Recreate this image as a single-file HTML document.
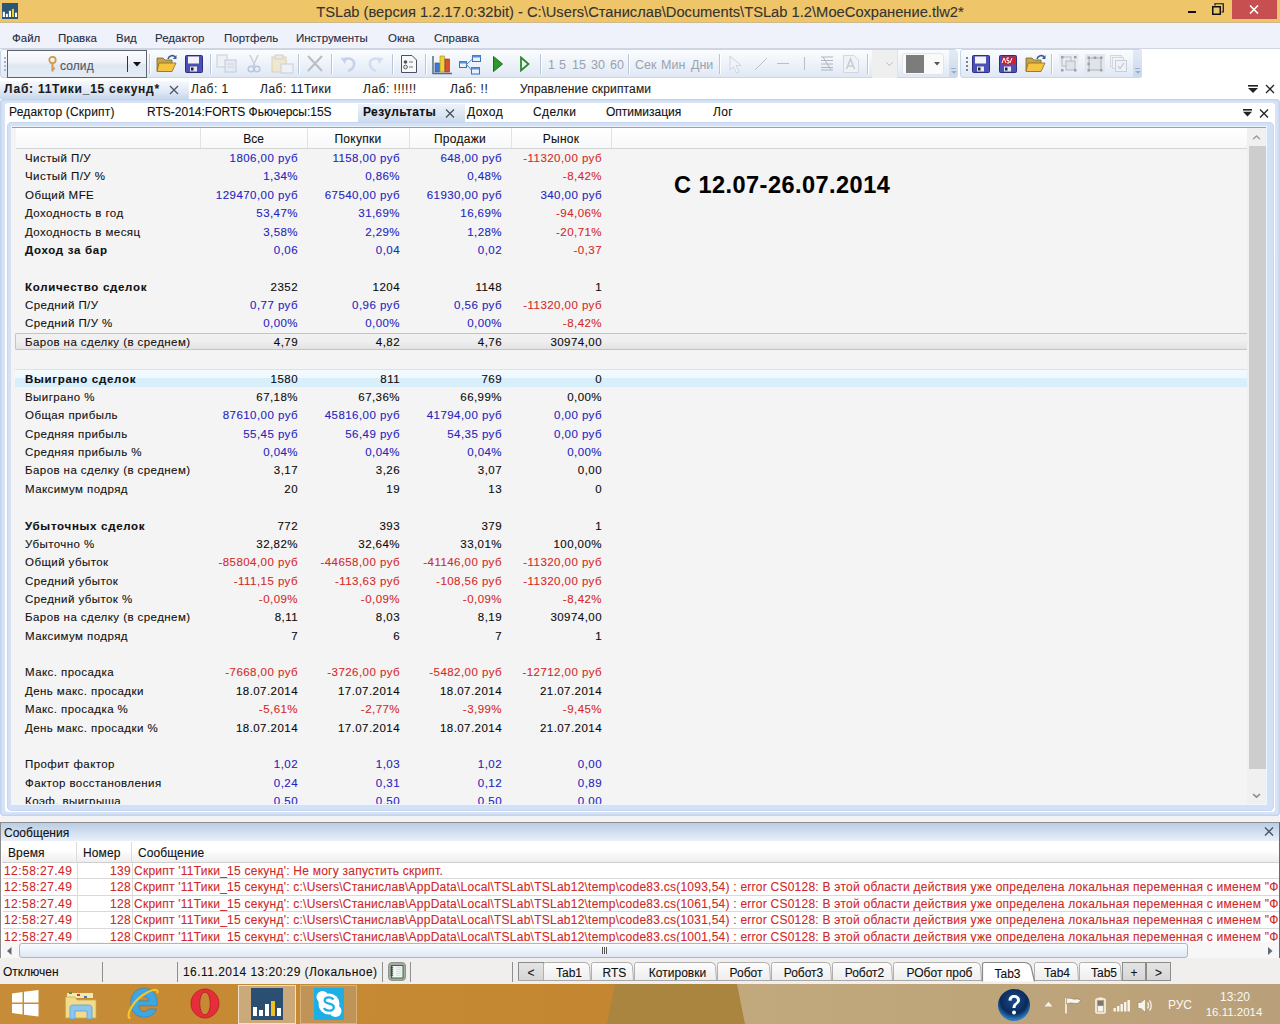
<!DOCTYPE html>
<html><head><meta charset="utf-8">
<style>
*{box-sizing:border-box;margin:0;padding:0}
html,body{width:1280px;height:1024px;overflow:hidden;background:#fff;font-family:"Liberation Sans",sans-serif;font-size:12px;color:#101010}
.a{position:absolute}
.t{position:absolute;white-space:pre;line-height:14px;-webkit-text-stroke:0.1px currentColor}
.lb,.vl,.mrow span{-webkit-text-stroke:0.1px currentColor}
/* title */
#title{left:0;top:0;width:1280px;height:23px;background:#efc56a;border-bottom:1px solid #cdb98e}
#title .cap{left:0;width:1280px;top:3.5px;text-align:center;font-size:14.7px;line-height:17px;color:#333}
#close{left:1232px;top:0;width:45px;height:19px;background:#c74f4f}
/* menu */
#menu{left:0;top:23px;width:1280px;height:26px;background:#eff2fa;border-bottom:1px solid #cfd6e2}
#menu .t{top:8px;font-size:11.5px;color:#1e2d45}
/* toolbar */
#tbar{left:0;top:49px;width:1280px;height:30px;background:#fff}
.band{position:absolute;top:0;height:29px;border:1px solid #c9d6e8;border-radius:3px;background:linear-gradient(#fbfcfe 0%,#eef3fa 50%,#dfe8f4 100%)}
.sep{position:absolute;top:5px;width:1px;height:20px;background:#b9c6d8;box-shadow:1px 0 0 #fff}
.tbt{position:absolute;top:8.5px;font-size:12px;line-height:14px;color:#9aa2ae;white-space:pre}
/* doc tabs */
#dtabs{left:0;top:79px;width:1280px;height:21px;background:#fff}
#dtabs .t{top:3px;color:#1a1a1a}
#seltab{left:0;top:2px;width:189px;height:18px;background:linear-gradient(#f7f9fd,#dfe8f5 60%,#c7d7ed)}
/* main frame */
#frame{left:0;top:99px;width:1280px;height:717px;background:#d6e3f7;box-shadow:inset 0 0 0 1.5px #c4d4ed;border-radius:4px}
#framein{left:5px;top:4px;width:1270px;height:709px;background:#fff;border-radius:3px}
#ptabs .t{top:6px}
#selptab{left:353px;top:1px;width:107px;height:18px;background:linear-gradient(#eef3fa,#cddbee)}
#gframe{left:7px;top:23px;width:1267px;height:689px;background:#d3e0f6;box-shadow:inset 0 0 0 1px #c6d6ef;border-radius:5px}
#ginner{left:12px;top:127px;width:1254px;height:677px;background:#f4f4f4;border-top:1px solid #7fa3d3;overflow:hidden;box-shadow:0 0 0 1px #eef6fd}
#ghead{left:4px;top:0;width:1231px;height:21px;background:linear-gradient(#fff,#f7f8fa);border-bottom:1px solid #d5d5d5}
.hsep{position:absolute;top:0;width:1px;height:20px;background:#e2e2e2}
.lb{position:absolute;left:13px;white-space:pre;line-height:14px;font-size:11.5px;letter-spacing:0.43px;color:#101010}
.lb.b{font-weight:bold;letter-spacing:0.7px}
.vl{position:absolute;white-space:pre;line-height:14px;font-size:11.5px;letter-spacing:0.45px;text-align:right}
#vscroll{left:1235px;top:0;width:19px;height:676px;background:#f0f0f0}
#thumb{left:2px;top:18px;width:17px;height:623px;background:#cdcdcd}
/* messages */
#msgp{left:0;top:822px;width:1280px;height:136px;background:#fff;border-top:1px solid #8f8f8f;border-right:1px solid #6a6a6a;border-left:1px solid #8a8a8a}
#msgtitle{left:0;top:0;width:1278px;height:18px;background:linear-gradient(#b9cde6,#e9f0f9)}
#mhead{left:1px;top:19px;width:1277px;height:21px;background:linear-gradient(#fff 0%,#fff 40%,#eeeeee 100%);border-bottom:1px solid #cfcfcf}
.mrow{position:absolute;left:2px;width:1277px;height:16.4px;border-bottom:1px solid #d9d9d9;white-space:pre;color:#d02828;overflow:hidden}
.mrow span{position:absolute;top:1px;line-height:14px}
.mt{left:1px;letter-spacing:0.45px}
.mn{left:74px;width:54px;text-align:right;letter-spacing:0.3px}
.mm{left:131px;letter-spacing:0.24px}
#mbody{left:0;top:40px;width:1278px;height:80px;overflow:hidden}
/* status */
#status{left:0;top:958px;width:1280px;height:26px;background:#f0efee}
#status .t{top:7px}
.ssep{position:absolute;top:4px;width:1px;height:20px;background:#8f8f8f}
.stab{position:absolute;top:5px;height:18px;background:linear-gradient(#fafafa,#eaeaea);border:1px solid #b5b5b5;border-bottom:none;border-radius:2px 8px 0 0}
.stab span{position:absolute;left:0;right:0;top:2px;text-align:center;line-height:14px;white-space:pre}
/* taskbar */
#task{left:0;top:984px;width:1280px;height:40px;background:#c48a36}
</style></head><body>

<!-- TITLE -->
<div id="title" class="a">
  <svg class="a" style="left:2px;top:3px" width="16" height="16" viewBox="0 0 16 16"><rect width="16" height="16" fill="#2b5676"/><rect x="0.8" y="8.8" width="2.1" height="5.2" fill="#fff"/><rect x="3.9" y="10.8" width="2" height="3.2" fill="#fff"/><rect x="6.9" y="7.8" width="2.1" height="6.2" fill="#fff"/><rect x="10" y="5.9" width="2" height="8.1" fill="#f5cc22"/><rect x="13" y="9.7" width="2" height="4.3" fill="#fff"/></svg>
  <div class="t cap">TSLab (версия 1.2.17.0:32bit) - C:\Users\Станислав\Documents\TSLab 1.2\МоеСохранение.tlw2*</div>
  <div class="a" style="left:1188px;top:11px;width:8px;height:2px;background:#111"></div>
  <svg class="a" style="left:1212px;top:3px" width="12" height="12" viewBox="0 0 12 12"><rect x="0.75" y="3.75" width="7.5" height="7.5" fill="none" stroke="#111" stroke-width="1.5"/><path d="M3 2.5V0.75H11.25V9H9.5" fill="none" stroke="#111" stroke-width="1.2"/></svg>
  <div id="close" class="a"><svg class="a" style="left:17px;top:5px" width="10" height="9" viewBox="0 0 10 9"><path d="M1 0.5L9 8.5M9 0.5L1 8.5" stroke="#fff" stroke-width="1.6"/></svg></div>
</div>

<!-- MENU -->
<div id="menu" class="a">
  <div class="t" style="left:12px">Файл</div>
  <div class="t" style="left:58px">Правка</div>
  <div class="t" style="left:116px">Вид</div>
  <div class="t" style="left:155px">Редактор</div>
  <div class="t" style="left:224px">Портфель</div>
  <div class="t" style="left:296px">Инструменты</div>
  <div class="t" style="left:388px">Окна</div>
  <div class="t" style="left:434px">Справка</div>
</div>

<!-- TOOLBAR -->
<div id="tbar" class="a">
  <div class="band" style="left:0;width:957px"></div>
  <div class="band" style="left:960px;width:182px"></div>
  <!-- grip -->
<div class="a" style="left:4px;top:8px;width:2px;height:15px;background:repeating-linear-gradient(#a9b6c8 0 2px,transparent 2px 4px)"></div>
<!-- combo -->
<div class="a" style="left:7px;top:1px;width:140px;height:28px;border:1px solid #5d636e;background:linear-gradient(#fbfcfe 0%,#eef2f8 45%,#dfe7f2 55%,#e5ecf5 100%)"></div>
<svg class="a" style="left:48px;top:7px" width="9" height="17" viewBox="0 0 9 17"><circle cx="4.5" cy="4" r="3.2" fill="none" stroke="#d19a4a" stroke-width="1.8"/><path d="M4.5 7V15.5M4.5 12.5H7" stroke="#d19a4a" stroke-width="2"/></svg>
<div class="t" style="left:60px;top:9.5px;font-size:12px;color:#4e5666;letter-spacing:0.1px">солид</div>
<div class="a" style="left:127px;top:7px;width:1px;height:16px;background:#333"></div>
<svg class="a" style="left:133px;top:13px" width="8" height="5" viewBox="0 0 8 5"><path d="M0 0H8L4 4.5Z" fill="#111"/></svg>
<div class="sep" style="left:149px"></div>
<!-- open -->
<svg class="a" style="left:156px;top:5px" width="22" height="19" viewBox="0 0 22 19"><path d="M1 4H7L9 6H16V17H1Z" fill="#c9a44a" stroke="#7a6530" stroke-width="0.8"/><path d="M3 9H20L16 17.5H1Z" fill="#f5c542" stroke="#8b6a22" stroke-width="0.8"/><path d="M12 5C13 1.5 17 0.5 19.5 3" fill="none" stroke="#3a5f8f" stroke-width="1.6"/><path d="M20.5 1V5H16.8Z" fill="#3a5f8f"/></svg>
<!-- save -->
<svg class="a" style="left:185px;top:6px" width="18" height="18" viewBox="0 0 18 18"><rect x="0.5" y="0.5" width="17" height="17" rx="1" fill="#4b4fb8" stroke="#2c2f80"/><rect x="3" y="1.5" width="11" height="7" fill="#f4f4f8"/><rect x="5" y="11.5" width="7" height="5" fill="#e8e8ee"/><rect x="6" y="12.5" width="2.5" height="3" fill="#222"/></svg>
<div class="sep" style="left:210px"></div>
<!-- copy disabled -->
<svg class="a" style="left:216px;top:5px" width="22" height="19" viewBox="0 0 22 19"><rect x="1" y="1" width="10" height="12" fill="#eef1f6" stroke="#c7ced9"/><rect x="9" y="6" width="11" height="12" fill="#e6ebf3" stroke="#c2cad8"/><path d="M11 10H18M11 13H18" stroke="#cdd4df"/></svg>
<!-- cut disabled -->
<svg class="a" style="left:247px;top:5px" width="14" height="19" viewBox="0 0 14 19"><path d="M3 1L8 12M11 1L6 12" stroke="#c9d1e0" stroke-width="1.6"/><circle cx="4" cy="15" r="2.8" fill="none" stroke="#b8c6e2" stroke-width="1.5"/><circle cx="10" cy="15" r="2.8" fill="none" stroke="#b8c6e2" stroke-width="1.5"/></svg>
<!-- paste disabled -->
<svg class="a" style="left:271px;top:5px" width="23" height="20" viewBox="0 0 23 20"><rect x="1" y="3" width="14" height="15" fill="#efe8cf" stroke="#d9d0b4"/><rect x="4" y="1" width="8" height="4" fill="#e9e9ea" stroke="#cfcfd2"/><rect x="10" y="10" width="12" height="9" fill="#eef1f6" stroke="#c7ced9"/></svg>
<div class="sep" style="left:298px"></div>
<!-- delete X disabled -->
<svg class="a" style="left:307px;top:6px" width="16" height="17" viewBox="0 0 16 17"><path d="M1 1L15 16M15 1L1 16" stroke="#b9bdc4" stroke-width="2"/></svg>
<div class="sep" style="left:331px"></div>
<!-- undo/redo disabled -->
<svg class="a" style="left:340px;top:7px" width="17" height="16" viewBox="0 0 17 16"><path d="M4 4C9 1 15 3 14 9C13.5 12 11 14 8 15" fill="none" stroke="#c5d3ea" stroke-width="2.6"/><path d="M0.5 2L7 1.5L5 8Z" fill="#c5d3ea"/></svg>
<svg class="a" style="left:367px;top:7px" width="17" height="16" viewBox="0 0 17 16"><path d="M13 4C8 1 2 3 3 9C3.5 12 6 14 9 15" fill="none" stroke="#d2ddef" stroke-width="2.6"/><path d="M16.5 2L10 1.5L12 8Z" fill="#d2ddef"/></svg>
<div class="sep" style="left:392px"></div>
<!-- properties doc -->
<svg class="a" style="left:401px;top:6px" width="16" height="18" viewBox="0 0 16 18"><path d="M0.5 0.5H11L15.5 5V17.5H0.5Z" fill="#f7f8fa" stroke="#4a5060"/><circle cx="4.5" cy="7" r="1.8" fill="#555"/><circle cx="4.5" cy="12" r="1.8" fill="none" stroke="#555"/><path d="M8 7H12M8 12H12" stroke="#777" stroke-width="1.2"/></svg>
<div class="sep" style="left:425px"></div>
<!-- chart -->
<svg class="a" style="left:432px;top:5px" width="22" height="21" viewBox="0 0 22 21"><path d="M1 2V19.5H20" fill="none" stroke="#5b6a80" stroke-width="1.5"/><rect x="3" y="9" width="4.5" height="9" fill="#3f7ad0" stroke="#274f8a" stroke-width="0.6"/><rect x="8" y="2" width="4.5" height="16" fill="#f0cf3a" stroke="#9f8a1c" stroke-width="0.6"/><rect x="13" y="5" width="4.5" height="13" fill="#d8502c" stroke="#8d2f16" stroke-width="0.6"/></svg>
<!-- network -->
<svg class="a" style="left:459px;top:6px" width="22" height="20" viewBox="0 0 22 20"><rect x="0.5" y="6.5" width="7" height="6" fill="#e8f0fb" stroke="#3c6fc0"/><rect x="0.5" y="6.5" width="7" height="2" fill="#5a8fd8"/><rect x="13.5" y="0.5" width="8" height="6" fill="#e8f0fb" stroke="#3c6fc0"/><rect x="13.5" y="0.5" width="8" height="2" fill="#5a8fd8"/><rect x="12.5" y="12.5" width="8" height="6.5" fill="#e8f0fb" stroke="#3c6fc0"/><rect x="12.5" y="12.5" width="8" height="2" fill="#5a8fd8"/><path d="M7.5 9.5L13.5 4M7.5 9.5L12.5 15" stroke="#5a7fb8"/></svg>
<!-- play -->
<svg class="a" style="left:493px;top:7px" width="10" height="16" viewBox="0 0 10 16"><path d="M0.5 0.5L9.5 8L0.5 15.5Z" fill="#2d9a2d" stroke="#1d6a1d"/></svg>
<svg class="a" style="left:520px;top:7px" width="10" height="16" viewBox="0 0 10 16"><path d="M1 1.5L8.5 8L1 14.5Z" fill="none" stroke="#2a8a2a" stroke-width="1.8"/></svg>
<div class="sep" style="left:540px"></div>
<div class="tbt" style="left:548px;font-size:12.5px">1</div>
<div class="tbt" style="left:559px;font-size:12.5px">5</div>
<div class="tbt" style="left:572px;font-size:12.5px">15</div>
<div class="tbt" style="left:591px;font-size:12.5px">30</div>
<div class="tbt" style="left:610px;font-size:12.5px">60</div>
<div class="sep" style="left:628px"></div>
<div class="tbt" style="left:635px;font-size:12.5px">Сек</div>
<div class="tbt" style="left:661px;font-size:12.5px">Мин</div>
<div class="tbt" style="left:691px;font-size:12.5px">Дни</div>
<div class="sep" style="left:719px"></div>
<!-- drawing tools disabled -->
<svg class="a" style="left:729px;top:6px" width="13" height="19" viewBox="0 0 13 19"><path d="M1 1V15L4.5 11.5L7.5 18L10 17L7 10.5H12Z" fill="#f1f4f8" stroke="#cdd5e0" stroke-width="1"/></svg>
<svg class="a" style="left:754px;top:8px" width="14" height="14" viewBox="0 0 14 14"><path d="M1 13L13 1" stroke="#b8bec8" stroke-width="1"/></svg>
<div class="a" style="left:777px;top:14px;width:12px;height:1px;background:#b8bec8"></div>
<div class="a" style="left:804px;top:8px;width:1px;height:13px;background:#b8bec8"></div>
<svg class="a" style="left:820px;top:7px" width="14" height="15" viewBox="0 0 14 15"><path d="M1 1H13M1 4.5H13M1 8H13M1 11.5H13M1 14H13M3 1L11 14" stroke="#b0b6c0" stroke-width="1"/></svg>
<svg class="a" style="left:843px;top:6px" width="16" height="18" viewBox="0 0 16 18"><path d="M0.5 0.5H11L15.5 5V17.5H0.5Z" fill="#f0f2f5" stroke="#d3d8e0"/><path d="M3.5 14L7.5 4L11.5 14M5 11H10" stroke="#c7ccd5" stroke-width="1.6" fill="none"/></svg>
<div class="sep" style="left:867px"></div>
<div class="a" style="left:872px;top:1px;width:26px;height:28px;background:#efefef;border-right:1px solid #e2e2e2"></div>
<svg class="a" style="left:886px;top:13px" width="7" height="4" viewBox="0 0 7 4"><path d="M0.5 0.5L3.5 3.5L6.5 0.5" fill="none" stroke="#b9b9b9"/></svg>
<div class="a" style="left:902px;top:4px;width:42px;height:22px;border:1px solid #e2e6ec;border-radius:3px;background:#fafafa"></div>
<div class="a" style="left:906px;top:6px;width:18px;height:18px;background:#7c7c7c"></div>
<svg class="a" style="left:934px;top:13px" width="6" height="4" viewBox="0 0 6 4"><path d="M0 0H6L3 3.5Z" fill="#555"/></svg>
<div class="a" style="left:949px;top:1px;width:9px;height:28px;background:linear-gradient(#e3ebf6,#c9d8ec);border-radius:0 3px 3px 0"></div>
<div class="a" style="left:951px;top:19px;width:5px;height:1px;background:#9badc9"></div>
<svg class="a" style="left:951px;top:22px" width="6" height="4" viewBox="0 0 6 4"><path d="M0 0H6L3 3Z" fill="#9badc9"/></svg>
<!-- band 2 -->
<div class="a" style="left:966px;top:8px;width:2px;height:15px;background:repeating-linear-gradient(#778397 0 2px,transparent 2px 4px)"></div>
<svg class="a" style="left:972px;top:6px" width="18" height="18" viewBox="0 0 18 18"><rect x="0.5" y="0.5" width="17" height="17" rx="1" fill="#4b4fb8" stroke="#2c2f80"/><rect x="3" y="1.5" width="11" height="7" fill="#f4f4f8"/><rect x="5" y="11.5" width="7" height="5" fill="#e8e8ee"/><rect x="6" y="12.5" width="2.5" height="3" fill="#222"/></svg>
<svg class="a" style="left:999px;top:6px" width="18" height="18" viewBox="0 0 18 18"><rect x="0.5" y="0.5" width="17" height="17" rx="1" fill="#4b4fb8" stroke="#2c2f80"/><rect x="2" y="1.5" width="14" height="8" fill="#d02030"/><path d="M3 8L5 3L7 8M10 3H8V5.5H10V8H8M11 8L13 3" stroke="#fff" stroke-width="1" fill="none"/><rect x="5" y="11.5" width="7" height="5" fill="#e8e8ee"/><rect x="6" y="12.5" width="2.5" height="3" fill="#222"/></svg>
<svg class="a" style="left:1025px;top:5px" width="22" height="19" viewBox="0 0 22 19"><path d="M1 4H7L9 6H16V17H1Z" fill="#c9a44a" stroke="#7a6530" stroke-width="0.8"/><path d="M3 9H20L16 17.5H1Z" fill="#f5c542" stroke="#8b6a22" stroke-width="0.8"/><path d="M12 5C13 1.5 17 0.5 19.5 3" fill="none" stroke="#3a5f8f" stroke-width="1.6"/><path d="M20.5 1V5H16.8Z" fill="#3a5f8f"/></svg>
<div class="sep" style="left:1051px"></div>
<svg class="a" style="left:1059px;top:5px" width="20" height="20" viewBox="0 0 20 20"><rect x="0" y="0" width="20" height="20" fill="#e9ecf0"/><rect x="3" y="3" width="9" height="9" fill="none" stroke="#b3b9c3"/><rect x="7" y="7" width="9" height="9" fill="#e0e4ea" stroke="#b3b9c3"/><rect x="2" y="2" width="2.5" height="2.5" fill="#9aa1ac"/><rect x="15" y="2" width="2.5" height="2.5" fill="#9aa1ac"/><rect x="2" y="15" width="2.5" height="2.5" fill="#9aa1ac"/><rect x="15" y="15" width="2.5" height="2.5" fill="#9aa1ac"/></svg>
<svg class="a" style="left:1085px;top:5px" width="20" height="20" viewBox="0 0 20 20"><rect x="0" y="0" width="20" height="20" fill="#e4e7eb"/><rect x="4" y="4" width="12" height="12" fill="#e0e4ea" stroke="#a9b0ba"/><rect x="2.5" y="2.5" width="2.5" height="2.5" fill="#9aa1ac"/><rect x="15" y="2.5" width="2.5" height="2.5" fill="#9aa1ac"/><rect x="2.5" y="15" width="2.5" height="2.5" fill="#9aa1ac"/><rect x="15" y="15" width="2.5" height="2.5" fill="#9aa1ac"/><rect x="8.75" y="2.5" width="2.5" height="2.5" fill="#9aa1ac"/><rect x="2.5" y="8.75" width="2.5" height="2.5" fill="#9aa1ac"/></svg>
<svg class="a" style="left:1110px;top:6px" width="17" height="18" viewBox="0 0 17 18"><rect x="0.5" y="0.5" width="11" height="11" fill="#f1f3f6" stroke="#d3d8df"/><rect x="2.5" y="2.5" width="11" height="11" fill="#f1f3f6" stroke="#d3d8df"/><rect x="5.5" y="5.5" width="11" height="11" fill="#eef1f5" stroke="#c9cfd8"/><path d="M8 11L10 13.5L14 8" fill="none" stroke="#c0c7d2" stroke-width="1.2"/></svg>
<div class="a" style="left:1133px;top:1px;width:9px;height:28px;background:linear-gradient(#e3ebf6,#c9d8ec);border-radius:0 3px 3px 0"></div>
<div class="a" style="left:1135px;top:19px;width:5px;height:1px;background:#9badc9"></div>
<svg class="a" style="left:1135px;top:22px" width="6" height="4" viewBox="0 0 6 4"><path d="M0 0H6L3 3Z" fill="#9badc9"/></svg>

</div>

<!-- DOC TABS -->
<div id="dtabs" class="a">
  <div id="seltab" class="a"></div>
  <div class="t" style="left:4px;font-weight:bold;letter-spacing:0.75px">Лаб: 11Тики_15 секунд*</div>
  <svg class="a" style="left:169px;top:6px" width="10" height="10" viewBox="0 0 10 10"><path d="M1 1L9 9M9 1L1 9" stroke="#4f5660" stroke-width="1.3"/></svg>
  <div class="t" style="left:191px;letter-spacing:0.5px">Лаб: 1</div>
  <div class="t" style="left:260px;letter-spacing:0.5px">Лаб: 11Тики</div>
  <div class="t" style="left:363px;letter-spacing:0.5px">Лаб: !!!!!!</div>
  <div class="t" style="left:450px;letter-spacing:0.5px">Лаб: !!</div>
  <div class="t" style="left:520px;letter-spacing:0.15px">Управление скриптами</div>
  <svg class="a" style="left:1248px;top:6px" width="10" height="10" viewBox="0 0 10 10"><rect x="0" y="0" width="10" height="1.6" fill="#222"/><path d="M0 3H10L5 8Z" fill="#222"/></svg>
<svg class="a" style="left:1265px;top:5px" width="10" height="10" viewBox="0 0 10 10"><path d="M1 1L9 9M9 1L1 9" stroke="#222" stroke-width="1.3"/></svg>

</div>

<!-- MAIN FRAME -->
<div id="frame" class="a">
  <div id="framein" class="a">
    <div id="ptabs">
      <div id="selptab" class="a"></div>
      <div class="t" style="left:4px;top:2px;letter-spacing:0.2px">Редактор (Скрипт)</div>
      <div class="t" style="left:142px;top:2px">RTS-2014:FORTS Фьючерсы:15S</div>
      <div class="t" style="left:358px;top:2px;font-weight:bold;letter-spacing:0.4px">Результаты</div>
      <svg class="a" style="left:440px;top:6px" width="10" height="9" viewBox="0 0 10 9"><path d="M1 0.5L9 8.5M9 0.5L1 8.5" stroke="#4a4f58" stroke-width="1.3"/></svg>
      <div class="t" style="left:462px;top:2px;letter-spacing:0.4px">Доход</div>
      <div class="t" style="left:528px;top:2px;letter-spacing:0.4px">Сделки</div>
      <div class="t" style="left:601px;top:2px">Оптимизация</div>
      <div class="t" style="left:708px;top:2px;letter-spacing:0.4px">Лог</div>
      <svg class="a" style="left:1238px;top:6px" width="10" height="9" viewBox="0 0 10 9"><rect x="0" y="0" width="9" height="1.6" fill="#222"/><path d="M0 2.8H9L4.5 7.5Z" fill="#222"/></svg>
      <svg class="a" style="left:1254px;top:6px" width="10" height="9" viewBox="0 0 10 9"><path d="M1 0.5L9 8.5M9 0.5L1 8.5" stroke="#222" stroke-width="1.3"/></svg>
    </div>
  </div>
  <div id="gframe" class="a"></div>
</div>

<div id="ginner" class="a">
  <div id="ghead" class="a">
    <div class="hsep" style="left:184px"></div>
    <div class="hsep" style="left:291px"></div>
    <div class="hsep" style="left:393px"></div>
    <div class="hsep" style="left:495px"></div>
    <div class="hsep" style="left:595px"></div>
    <div class="t" style="left:184px;width:107px;top:4px;text-align:center">Все</div>
    <div class="t" style="left:291px;width:102px;top:4px;text-align:center;letter-spacing:0.3px">Покупки</div>
    <div class="t" style="left:393px;width:102px;top:4px;text-align:center;letter-spacing:0.3px">Продажи</div>
    <div class="t" style="left:495px;width:100px;top:4px;text-align:center;letter-spacing:0.3px">Рынок</div>
  </div>
  <div class="a" style="left:3px;top:205px;width:1234px;height:17px;border:1px solid #c4c4c4;border-right-color:#dadada;border-radius:2px;background:linear-gradient(#f1f1f1 0%,#efefef 45%,#e3e3e3 100%)"></div>
  <div class="a" style="left:3px;top:241px;width:1234px;height:18px;border-top:1px solid #cfe6f6;background:linear-gradient(#f3fafd 0%,#eef8fd 45%,#d9effb 50%,#d6eefb 100%)"></div>
<div class="lb" style="top:23.10px">Чистый П/У</div>
<div class="vl" style="top:23.10px;left:86px;width:200px;color:#2424c0">1806,00 руб</div>
<div class="vl" style="top:23.10px;left:188px;width:200px;color:#2424c0">1158,00 руб</div>
<div class="vl" style="top:23.10px;left:290px;width:200px;color:#2424c0">648,00 руб</div>
<div class="vl" style="top:23.10px;left:390px;width:200px;color:#d42a2a">-11320,00 руб</div>
<div class="lb" style="top:41.47px">Чистый П/У %</div>
<div class="vl" style="top:41.47px;left:86px;width:200px;color:#2424c0">1,34%</div>
<div class="vl" style="top:41.47px;left:188px;width:200px;color:#2424c0">0,86%</div>
<div class="vl" style="top:41.47px;left:290px;width:200px;color:#2424c0">0,48%</div>
<div class="vl" style="top:41.47px;left:390px;width:200px;color:#d42a2a">-8,42%</div>
<div class="lb" style="top:59.84px">Общий MFE</div>
<div class="vl" style="top:59.84px;left:86px;width:200px;color:#2424c0">129470,00 руб</div>
<div class="vl" style="top:59.84px;left:188px;width:200px;color:#2424c0">67540,00 руб</div>
<div class="vl" style="top:59.84px;left:290px;width:200px;color:#2424c0">61930,00 руб</div>
<div class="vl" style="top:59.84px;left:390px;width:200px;color:#2424c0">340,00 руб</div>
<div class="lb" style="top:78.21px">Доходность в год</div>
<div class="vl" style="top:78.21px;left:86px;width:200px;color:#2424c0">53,47%</div>
<div class="vl" style="top:78.21px;left:188px;width:200px;color:#2424c0">31,69%</div>
<div class="vl" style="top:78.21px;left:290px;width:200px;color:#2424c0">16,69%</div>
<div class="vl" style="top:78.21px;left:390px;width:200px;color:#d42a2a">-94,06%</div>
<div class="lb" style="top:96.58px">Доходность в месяц</div>
<div class="vl" style="top:96.58px;left:86px;width:200px;color:#2424c0">3,58%</div>
<div class="vl" style="top:96.58px;left:188px;width:200px;color:#2424c0">2,29%</div>
<div class="vl" style="top:96.58px;left:290px;width:200px;color:#2424c0">1,28%</div>
<div class="vl" style="top:96.58px;left:390px;width:200px;color:#d42a2a">-20,71%</div>
<div class="lb b" style="top:114.95px">Доход за бар</div>
<div class="vl" style="top:114.95px;left:86px;width:200px;color:#2424c0">0,06</div>
<div class="vl" style="top:114.95px;left:188px;width:200px;color:#2424c0">0,04</div>
<div class="vl" style="top:114.95px;left:290px;width:200px;color:#2424c0">0,02</div>
<div class="vl" style="top:114.95px;left:390px;width:200px;color:#d42a2a">-0,37</div>
<div class="lb b" style="top:151.69px">Количество сделок</div>
<div class="vl" style="top:151.69px;left:86px;width:200px;color:#0a0a0a">2352</div>
<div class="vl" style="top:151.69px;left:188px;width:200px;color:#0a0a0a">1204</div>
<div class="vl" style="top:151.69px;left:290px;width:200px;color:#0a0a0a">1148</div>
<div class="vl" style="top:151.69px;left:390px;width:200px;color:#0a0a0a">1</div>
<div class="lb" style="top:170.06px">Средний П/У</div>
<div class="vl" style="top:170.06px;left:86px;width:200px;color:#2424c0">0,77 руб</div>
<div class="vl" style="top:170.06px;left:188px;width:200px;color:#2424c0">0,96 руб</div>
<div class="vl" style="top:170.06px;left:290px;width:200px;color:#2424c0">0,56 руб</div>
<div class="vl" style="top:170.06px;left:390px;width:200px;color:#d42a2a">-11320,00 руб</div>
<div class="lb" style="top:188.43px">Средний П/У %</div>
<div class="vl" style="top:188.43px;left:86px;width:200px;color:#2424c0">0,00%</div>
<div class="vl" style="top:188.43px;left:188px;width:200px;color:#2424c0">0,00%</div>
<div class="vl" style="top:188.43px;left:290px;width:200px;color:#2424c0">0,00%</div>
<div class="vl" style="top:188.43px;left:390px;width:200px;color:#d42a2a">-8,42%</div>
<div class="lb" style="top:206.80px">Баров на сделку (в среднем)</div>
<div class="vl" style="top:206.80px;left:86px;width:200px;color:#0a0a0a">4,79</div>
<div class="vl" style="top:206.80px;left:188px;width:200px;color:#0a0a0a">4,82</div>
<div class="vl" style="top:206.80px;left:290px;width:200px;color:#0a0a0a">4,76</div>
<div class="vl" style="top:206.80px;left:390px;width:200px;color:#0a0a0a">30974,00</div>
<div class="lb b" style="top:243.54px">Выиграно сделок</div>
<div class="vl" style="top:243.54px;left:86px;width:200px;color:#0a0a0a">1580</div>
<div class="vl" style="top:243.54px;left:188px;width:200px;color:#0a0a0a">811</div>
<div class="vl" style="top:243.54px;left:290px;width:200px;color:#0a0a0a">769</div>
<div class="vl" style="top:243.54px;left:390px;width:200px;color:#0a0a0a">0</div>
<div class="lb" style="top:261.91px">Выиграно %</div>
<div class="vl" style="top:261.91px;left:86px;width:200px;color:#0a0a0a">67,18%</div>
<div class="vl" style="top:261.91px;left:188px;width:200px;color:#0a0a0a">67,36%</div>
<div class="vl" style="top:261.91px;left:290px;width:200px;color:#0a0a0a">66,99%</div>
<div class="vl" style="top:261.91px;left:390px;width:200px;color:#0a0a0a">0,00%</div>
<div class="lb" style="top:280.28px">Общая прибыль</div>
<div class="vl" style="top:280.28px;left:86px;width:200px;color:#2424c0">87610,00 руб</div>
<div class="vl" style="top:280.28px;left:188px;width:200px;color:#2424c0">45816,00 руб</div>
<div class="vl" style="top:280.28px;left:290px;width:200px;color:#2424c0">41794,00 руб</div>
<div class="vl" style="top:280.28px;left:390px;width:200px;color:#2424c0">0,00 руб</div>
<div class="lb" style="top:298.65px">Средняя прибыль</div>
<div class="vl" style="top:298.65px;left:86px;width:200px;color:#2424c0">55,45 руб</div>
<div class="vl" style="top:298.65px;left:188px;width:200px;color:#2424c0">56,49 руб</div>
<div class="vl" style="top:298.65px;left:290px;width:200px;color:#2424c0">54,35 руб</div>
<div class="vl" style="top:298.65px;left:390px;width:200px;color:#2424c0">0,00 руб</div>
<div class="lb" style="top:317.02px">Средняя прибыль %</div>
<div class="vl" style="top:317.02px;left:86px;width:200px;color:#2424c0">0,04%</div>
<div class="vl" style="top:317.02px;left:188px;width:200px;color:#2424c0">0,04%</div>
<div class="vl" style="top:317.02px;left:290px;width:200px;color:#2424c0">0,04%</div>
<div class="vl" style="top:317.02px;left:390px;width:200px;color:#2424c0">0,00%</div>
<div class="lb" style="top:335.39px">Баров на сделку (в среднем)</div>
<div class="vl" style="top:335.39px;left:86px;width:200px;color:#0a0a0a">3,17</div>
<div class="vl" style="top:335.39px;left:188px;width:200px;color:#0a0a0a">3,26</div>
<div class="vl" style="top:335.39px;left:290px;width:200px;color:#0a0a0a">3,07</div>
<div class="vl" style="top:335.39px;left:390px;width:200px;color:#0a0a0a">0,00</div>
<div class="lb" style="top:353.76px">Максимум подряд</div>
<div class="vl" style="top:353.76px;left:86px;width:200px;color:#0a0a0a">20</div>
<div class="vl" style="top:353.76px;left:188px;width:200px;color:#0a0a0a">19</div>
<div class="vl" style="top:353.76px;left:290px;width:200px;color:#0a0a0a">13</div>
<div class="vl" style="top:353.76px;left:390px;width:200px;color:#0a0a0a">0</div>
<div class="lb b" style="top:390.50px">Убыточных сделок</div>
<div class="vl" style="top:390.50px;left:86px;width:200px;color:#0a0a0a">772</div>
<div class="vl" style="top:390.50px;left:188px;width:200px;color:#0a0a0a">393</div>
<div class="vl" style="top:390.50px;left:290px;width:200px;color:#0a0a0a">379</div>
<div class="vl" style="top:390.50px;left:390px;width:200px;color:#0a0a0a">1</div>
<div class="lb" style="top:408.87px">Убыточно %</div>
<div class="vl" style="top:408.87px;left:86px;width:200px;color:#0a0a0a">32,82%</div>
<div class="vl" style="top:408.87px;left:188px;width:200px;color:#0a0a0a">32,64%</div>
<div class="vl" style="top:408.87px;left:290px;width:200px;color:#0a0a0a">33,01%</div>
<div class="vl" style="top:408.87px;left:390px;width:200px;color:#0a0a0a">100,00%</div>
<div class="lb" style="top:427.24px">Общий убыток</div>
<div class="vl" style="top:427.24px;left:86px;width:200px;color:#d42a2a">-85804,00 руб</div>
<div class="vl" style="top:427.24px;left:188px;width:200px;color:#d42a2a">-44658,00 руб</div>
<div class="vl" style="top:427.24px;left:290px;width:200px;color:#d42a2a">-41146,00 руб</div>
<div class="vl" style="top:427.24px;left:390px;width:200px;color:#d42a2a">-11320,00 руб</div>
<div class="lb" style="top:445.61px">Средний убыток</div>
<div class="vl" style="top:445.61px;left:86px;width:200px;color:#d42a2a">-111,15 руб</div>
<div class="vl" style="top:445.61px;left:188px;width:200px;color:#d42a2a">-113,63 руб</div>
<div class="vl" style="top:445.61px;left:290px;width:200px;color:#d42a2a">-108,56 руб</div>
<div class="vl" style="top:445.61px;left:390px;width:200px;color:#d42a2a">-11320,00 руб</div>
<div class="lb" style="top:463.98px">Средний убыток %</div>
<div class="vl" style="top:463.98px;left:86px;width:200px;color:#d42a2a">-0,09%</div>
<div class="vl" style="top:463.98px;left:188px;width:200px;color:#d42a2a">-0,09%</div>
<div class="vl" style="top:463.98px;left:290px;width:200px;color:#d42a2a">-0,09%</div>
<div class="vl" style="top:463.98px;left:390px;width:200px;color:#d42a2a">-8,42%</div>
<div class="lb" style="top:482.35px">Баров на сделку (в среднем)</div>
<div class="vl" style="top:482.35px;left:86px;width:200px;color:#0a0a0a">8,11</div>
<div class="vl" style="top:482.35px;left:188px;width:200px;color:#0a0a0a">8,03</div>
<div class="vl" style="top:482.35px;left:290px;width:200px;color:#0a0a0a">8,19</div>
<div class="vl" style="top:482.35px;left:390px;width:200px;color:#0a0a0a">30974,00</div>
<div class="lb" style="top:500.72px">Максимум подряд</div>
<div class="vl" style="top:500.72px;left:86px;width:200px;color:#0a0a0a">7</div>
<div class="vl" style="top:500.72px;left:188px;width:200px;color:#0a0a0a">6</div>
<div class="vl" style="top:500.72px;left:290px;width:200px;color:#0a0a0a">7</div>
<div class="vl" style="top:500.72px;left:390px;width:200px;color:#0a0a0a">1</div>
<div class="lb" style="top:537.46px">Макс. просадка</div>
<div class="vl" style="top:537.46px;left:86px;width:200px;color:#d42a2a">-7668,00 руб</div>
<div class="vl" style="top:537.46px;left:188px;width:200px;color:#d42a2a">-3726,00 руб</div>
<div class="vl" style="top:537.46px;left:290px;width:200px;color:#d42a2a">-5482,00 руб</div>
<div class="vl" style="top:537.46px;left:390px;width:200px;color:#d42a2a">-12712,00 руб</div>
<div class="lb" style="top:555.83px">День макс. просадки</div>
<div class="vl" style="top:555.83px;left:86px;width:200px;color:#0a0a0a">18.07.2014</div>
<div class="vl" style="top:555.83px;left:188px;width:200px;color:#0a0a0a">17.07.2014</div>
<div class="vl" style="top:555.83px;left:290px;width:200px;color:#0a0a0a">18.07.2014</div>
<div class="vl" style="top:555.83px;left:390px;width:200px;color:#0a0a0a">21.07.2014</div>
<div class="lb" style="top:574.20px">Макс. просадка %</div>
<div class="vl" style="top:574.20px;left:86px;width:200px;color:#d42a2a">-5,61%</div>
<div class="vl" style="top:574.20px;left:188px;width:200px;color:#d42a2a">-2,77%</div>
<div class="vl" style="top:574.20px;left:290px;width:200px;color:#d42a2a">-3,99%</div>
<div class="vl" style="top:574.20px;left:390px;width:200px;color:#d42a2a">-9,45%</div>
<div class="lb" style="top:592.57px">День макс. просадки %</div>
<div class="vl" style="top:592.57px;left:86px;width:200px;color:#0a0a0a">18.07.2014</div>
<div class="vl" style="top:592.57px;left:188px;width:200px;color:#0a0a0a">17.07.2014</div>
<div class="vl" style="top:592.57px;left:290px;width:200px;color:#0a0a0a">18.07.2014</div>
<div class="vl" style="top:592.57px;left:390px;width:200px;color:#0a0a0a">21.07.2014</div>
<div class="lb" style="top:629.31px">Профит фактор</div>
<div class="vl" style="top:629.31px;left:86px;width:200px;color:#2424c0">1,02</div>
<div class="vl" style="top:629.31px;left:188px;width:200px;color:#2424c0">1,03</div>
<div class="vl" style="top:629.31px;left:290px;width:200px;color:#2424c0">1,02</div>
<div class="vl" style="top:629.31px;left:390px;width:200px;color:#2424c0">0,00</div>
<div class="lb" style="top:647.68px">Фактор восстановления</div>
<div class="vl" style="top:647.68px;left:86px;width:200px;color:#2424c0">0,24</div>
<div class="vl" style="top:647.68px;left:188px;width:200px;color:#2424c0">0,31</div>
<div class="vl" style="top:647.68px;left:290px;width:200px;color:#2424c0">0,12</div>
<div class="vl" style="top:647.68px;left:390px;width:200px;color:#2424c0">0,89</div>
<div class="lb" style="top:666.05px">Коэф. выигрыша</div>
<div class="vl" style="top:666.05px;left:86px;width:200px;color:#2424c0">0,50</div>
<div class="vl" style="top:666.05px;left:188px;width:200px;color:#2424c0">0,50</div>
<div class="vl" style="top:666.05px;left:290px;width:200px;color:#2424c0">0,50</div>
<div class="vl" style="top:666.05px;left:390px;width:200px;color:#2424c0">0,00</div>
  <div class="t" style="left:662px;top:43px;font-size:23.5px;line-height:28px;font-weight:bold;letter-spacing:0.47px;color:#000">С 12.07-26.07.2014</div>
  <div id="vscroll" class="a">
    <svg class="a" style="left:5px;top:7px" width="9" height="5" viewBox="0 0 9 5"><path d="M1 4.2L4.5 1L8 4.2" fill="none" stroke="#9c9c9c" stroke-width="1.3"/></svg>
    <div id="thumb" class="a"></div>
    <svg class="a" style="left:5px;top:665px" width="9" height="5" viewBox="0 0 9 5"><path d="M1 1L4.5 4.2L8 1" fill="none" stroke="#8c8c8c" stroke-width="1.6"/></svg>
  </div>
</div>

<div class="a" style="left:0;top:816px;width:1280px;height:6px;background:#f3f3f5"></div>
<!-- MESSAGES -->
<div id="msgp" class="a">
  <div id="msgtitle" class="a"><div class="t" style="left:3px;top:3px;letter-spacing:0px">Сообщения</div>
    <svg class="a" style="left:1263px;top:4px" width="10" height="9" viewBox="0 0 10 9"><path d="M1 0.5L9 8.5M9 0.5L1 8.5" stroke="#4a5160" stroke-width="1.3"/></svg>
  </div>
  <div id="mhead" class="a">
    <div class="hsep" style="left:74px;height:21px;background:#dcdcdc"></div>
    <div class="hsep" style="left:129px;height:21px;background:#dcdcdc"></div>
    <div class="t" style="left:6px;top:4px;letter-spacing:0.1px">Время</div>
    <div class="t" style="left:81px;top:4px;letter-spacing:0.1px">Номер</div>
    <div class="t" style="left:136px;top:4px;letter-spacing:0.1px">Сообщение</div>
  </div>
  <div id="mbody" class="a">
    <div class="a" style="left:76px;top:0;width:1px;height:80px;background:#dcdcdc"></div>
    <div class="a" style="left:131px;top:0;width:1px;height:80px;background:#dcdcdc"></div>
<div class="mrow" style="top:0.00px"><span class="mt">12:58:27.49</span><span class="mn">139</span><span class="mm">Скрипт '11Тики_15 секунд': Не могу запустить скрипт.</span></div>
<div class="mrow" style="top:16.40px"><span class="mt">12:58:27.49</span><span class="mn">128</span><span class="mm">Скрипт '11Тики_15 секунд': c:\Users\Станислав\AppData\Local\TSLab\TSLab12\temp\code83.cs(1093,54) : error CS0128: В этой области действия уже определена локальная переменная с именем "Ф</span></div>
<div class="mrow" style="top:32.80px"><span class="mt">12:58:27.49</span><span class="mn">128</span><span class="mm">Скрипт '11Тики_15 секунд': c:\Users\Станислав\AppData\Local\TSLab\TSLab12\temp\code83.cs(1061,54) : error CS0128: В этой области действия уже определена локальная переменная с именем "Ф</span></div>
<div class="mrow" style="top:49.20px"><span class="mt">12:58:27.49</span><span class="mn">128</span><span class="mm">Скрипт '11Тики_15 секунд': c:\Users\Станислав\AppData\Local\TSLab\TSLab12\temp\code83.cs(1031,54) : error CS0128: В этой области действия уже определена локальная переменная с именем "Ф</span></div>
<div class="mrow" style="top:65.60px"><span class="mt">12:58:27.49</span><span class="mn">128</span><span class="mm">Скрипт '11Тики_15 секунд': c:\Users\Станислав\AppData\Local\TSLab\TSLab12\temp\code83.cs(1001,54) : error CS0128: В этой области действия уже определена локальная переменная с именем "Ф</span></div>
  </div>
  <!-- hscroll -->
  <div class="a" style="left:1px;top:119px;width:1277px;height:17px;background:#f7f7f7">
    <svg class="a" style="left:5px;top:5px" width="5" height="8" viewBox="0 0 5 8"><path d="M4.5 0L0 4L4.5 8Z" fill="#606a78"/></svg>
    <div class="a" style="left:17px;top:1px;width:1169px;height:15px;border:1px solid #a9b7c9;border-radius:3px;background:linear-gradient(#fbfdff,#dde7f3)"></div>
    <div class="a" style="left:600px;top:5px;width:5px;height:7px;border-left:1px solid #555;border-right:1px solid #555"></div>
    <div class="a" style="left:602px;top:5px;width:1px;height:7px;background:#555"></div>
    <svg class="a" style="left:1266px;top:5px" width="5" height="8" viewBox="0 0 5 8"><path d="M0 0L4.5 4L0 8Z" fill="#606a78"/></svg>
  </div>
</div>

<!-- STATUS -->
<div id="status" class="a">
  <div class="t" style="left:3px">Отключен</div>
  <div class="ssep" style="left:102px"></div>
  <div class="ssep" style="left:177px"></div>
  <div class="t" style="left:183px;letter-spacing:0.45px">16.11.2014 13:20:29 (Локальное)</div>
  <div class="ssep" style="left:382px"></div>
  <svg class="a" style="left:388px;top:4px" width="18" height="19" viewBox="0 0 18 19"><rect x="0.5" y="0.5" width="17" height="18" rx="3.5" fill="#a3aba3" stroke="#8d948d"/><rect x="3" y="3" width="12.5" height="13.5" fill="#3d6a3d"/><rect x="4.2" y="4" width="10.3" height="11.5" fill="#f2f8f2"/><path d="M2.5 5.2H5.2M2.5 7.2H5.2M2.5 9.2H5.2M2.5 11.2H5.2M2.5 13.2H5.2" stroke="#333" stroke-width="1"/><path d="M8 5.3H13.5M8 7.3H13.5M8 9.3H13.5M8 11.3H13.5M8 13.3H13.5" stroke="#c9d2e6" stroke-width="0.8"/></svg>
  <div class="ssep" style="left:410px"></div>
  <div class="ssep" style="left:512px"></div>
  <div class="a" style="left:518px;top:4px;width:26px;height:19px;background:linear-gradient(#e4e4e4,#d6d6d6);border:1px solid #8c8c8c"></div><div class="t" style="left:518px;top:8px;width:26px;text-align:center">&lt;</div>
<svg class="a" style="left:0;top:0" width="1280" height="26" viewBox="0 0 1280 26"><defs><linearGradient id="tg" x1="0" y1="0" x2="0" y2="1"><stop offset="0" stop-color="#fdfdfd"/><stop offset="1" stop-color="#ededed"/></linearGradient></defs><path d="M543.5,22.5 V6.5 Q543.5,4.5 545.5,4.5 H585 Q589,4.5 589.5,8.5 L590.5,22.5 Z" fill="url(#tg)" stroke="#b0b0b0" stroke-width="1"/><path d="M591.5,22.5 V6.5 Q591.5,4.5 593.5,4.5 H628 Q632,4.5 632.5,8.5 L633.5,22.5 Z" fill="url(#tg)" stroke="#b0b0b0" stroke-width="1"/><path d="M634.5,22.5 V6.5 Q634.5,4.5 636.5,4.5 H711 Q715,4.5 715.5,8.5 L716.5,22.5 Z" fill="url(#tg)" stroke="#b0b0b0" stroke-width="1"/><path d="M717.5,22.5 V6.5 Q717.5,4.5 719.5,4.5 H765 Q769,4.5 769.5,8.5 L770.5,22.5 Z" fill="url(#tg)" stroke="#b0b0b0" stroke-width="1"/><path d="M771.5,22.5 V6.5 Q771.5,4.5 773.5,4.5 H826 Q830,4.5 830.5,8.5 L831.5,22.5 Z" fill="url(#tg)" stroke="#b0b0b0" stroke-width="1"/><path d="M832.5,22.5 V6.5 Q832.5,4.5 834.5,4.5 H887 Q891,4.5 891.5,8.5 L892.5,22.5 Z" fill="url(#tg)" stroke="#b0b0b0" stroke-width="1"/><path d="M893.5,22.5 V6.5 Q893.5,4.5 895.5,4.5 H976 Q980,4.5 980.5,8.5 L981.5,22.5 Z" fill="url(#tg)" stroke="#b0b0b0" stroke-width="1"/><path d="M1034.5,22.5 V6.5 Q1034.5,4.5 1036.5,4.5 H1073 Q1077,4.5 1077.5,8.5 L1078.5,22.5 Z" fill="url(#tg)" stroke="#b0b0b0" stroke-width="1"/><path d="M1079.5,22.5 V6.5 Q1079.5,4.5 1081.5,4.5 H1116 Q1120,4.5 1120.5,8.5 L1121.5,22.5 Z" fill="url(#tg)" stroke="#b0b0b0" stroke-width="1"/><path d="M518,22.5H1171" stroke="#a8a8a8" stroke-width="1"/><path d="M982.5,23.5 V6.5 Q982.5,4.5 984.5,4.5 H1024 Q1029,4.5 1031,8.5 L1034.5,23.5" fill="#ffffff" stroke="#8a8a8a" stroke-width="1.2"/></svg>
<div class="t" style="left:544.5px;top:8px;width:49px;text-align:center;letter-spacing:0px">Tab1</div>
<div class="t" style="left:592.5px;top:8px;width:44px;text-align:center;letter-spacing:0px">RTS</div>
<div class="t" style="left:635.5px;top:8px;width:84px;text-align:center;letter-spacing:0px">Котировки</div>
<div class="t" style="left:718.5px;top:8px;width:55px;text-align:center;letter-spacing:0px">Робот</div>
<div class="t" style="left:772.5px;top:8px;width:62px;text-align:center;letter-spacing:0px">Робот3</div>
<div class="t" style="left:833.5px;top:8px;width:62px;text-align:center;letter-spacing:0px">Робот2</div>
<div class="t" style="left:894.5px;top:8px;width:90px;text-align:center;letter-spacing:0px">РОбот проб</div>
<div class="t" style="left:981px;top:9px;width:53px;text-align:center;letter-spacing:0px">Tab3</div>
<div class="t" style="left:1034px;top:8px;width:46px;text-align:center;letter-spacing:0px">Tab4</div>
<div class="t" style="left:1082px;top:8px;width:44px;text-align:center;letter-spacing:0px">Tab5</div>
<div class="a" style="left:1122px;top:4px;width:24px;height:19px;background:linear-gradient(#e4e4e4,#d6d6d6);border:1px solid #8c8c8c"></div><div class="t" style="left:1122px;top:8px;width:24px;text-align:center">+</div>
<div class="a" style="left:1146px;top:4px;width:25px;height:19px;background:linear-gradient(#e4e4e4,#d6d6d6);border:1px solid #8c8c8c"></div><div class="t" style="left:1146px;top:8px;width:25px;text-align:center">&gt;</div>
</div>

<!-- TASKBAR -->
<div id="task" class="a">
  <svg class="a" style="left:0;top:0" width="1280" height="40" viewBox="0 0 1280 40"><defs><linearGradient id="tk1" x1="0" y1="0" x2="1" y2="0"><stop offset="0" stop-color="#c78c37"/><stop offset="0.6" stop-color="#c3852f"/><stop offset="1" stop-color="#bd7c2b"/></linearGradient><linearGradient id="tk3" x1="0" y1="0" x2="1" y2="0"><stop offset="0" stop-color="#c2a97d"/><stop offset="0.5" stop-color="#bea479"/><stop offset="1" stop-color="#b9a07a"/></linearGradient></defs><rect width="1280" height="40" fill="url(#tk1)"/><path d="M615 0H737L745 40H607Z" fill="#a9853f"/><path d="M737 0H1280V40H745Z" fill="url(#tk3)"/></svg>
  <!-- windows logo -->
<svg class="a" style="left:12px;top:6px" width="27" height="27" viewBox="0 0 27 27"><path d="M0 3.5L10.5 2V12.5H0Z M12 1.8L26.5 0V12.5H12Z M0 14H10.5V24.5L0 23Z M12 14H26.5V26.5L12 24.7Z" fill="#fff"/></svg>
<!-- explorer -->
<svg class="a" style="left:65px;top:7px" width="32" height="29" viewBox="0 0 32 29"><rect x="2" y="2" width="26" height="5" fill="#f3e7b4"/><rect x="4" y="1" width="3" height="2" fill="#3da33d"/><rect x="12" y="3" width="3" height="2" fill="#c8412b"/><rect x="19" y="5" width="3" height="2" fill="#3a78c8"/><path d="M0.5 6H10L12 9H31V27H0.5Z" fill="#f1dc8c" stroke="#c9aa52" stroke-width="0.8"/><path d="M5 28V17C5 15 6 14 8 14H24C26 14 27 15 27 17V28H22V20H10V28Z" fill="#8fc6ee" stroke="#5e9fd8" stroke-width="0.8"/></svg>
<!-- IE -->
<svg class="a" style="left:127px;top:3px" width="33" height="33" viewBox="0 0 33 33"><path fill-rule="evenodd" fill="#3fa6e2" stroke="#2a7fb8" stroke-width="0.6" d="M17 3.5C24.5 3.5 30.8 9.5 30.8 17.5V21.5H12C12.3 25 14.2 27.3 17.5 27.3C19.8 27.3 21.3 26.3 22.3 24.8H30.2C28.5 30 23.5 33.2 17.5 33.2C9.5 33.2 3.8 27.5 3.8 18.5C3.8 10 9.5 3.5 17 3.5Z M12 16.5H22.3C22 13.5 20 12 17.2 12C14.4 12 12.4 13.5 12 16.5Z" transform="translate(0,-2.3) scale(0.98)"/><path d="M2.5 31C-1 27 6 15 16 8C24 2.5 31.5 1 30.5 5.5" fill="none" stroke="#f3c526" stroke-width="2.2" stroke-linecap="round"/></svg>
<!-- opera -->
<svg class="a" style="left:190px;top:4px" width="30" height="31" viewBox="0 0 30 31"><path fill-rule="evenodd" fill="#e62e3a" stroke="#b3101c" stroke-width="0.7" d="M15 1C22.5 1 29 7.5 29 15.5C29 23.5 22.5 30 15 30C7.5 30 1 23.5 1 15.5C1 7.5 7.5 1 15 1Z M15 4.2C12 4.2 9.8 9 9.8 15.5C9.8 22 12 26.8 15 26.8C18 26.8 20.2 22 20.2 15.5C20.2 9 18 4.2 15 4.2Z"/></svg>
<!-- tslab button -->
<div class="a" style="left:238px;top:1px;width:58px;height:39px;background:#caa97a;border:1px solid #efe2c8"></div>
<svg class="a" style="left:251px;top:4px" width="32" height="32" viewBox="0 0 32 32"><rect width="32" height="32" fill="#2b4f70"/><rect x="2" y="19" width="4" height="9" fill="#fff"/><rect x="8" y="22" width="4" height="6" fill="#fff"/><rect x="14" y="16" width="4" height="12" fill="#fff"/><rect x="20" y="13" width="4" height="15" fill="#f0c020"/><rect x="26" y="20" width="4" height="8" fill="#fff"/></svg>
<!-- skype button -->
<div class="a" style="left:300px;top:1px;width:57px;height:39px;background:#c09456;border:1px solid #d7b27c"></div>
<svg class="a" style="left:314px;top:4px" width="30" height="32" viewBox="0 0 30 32"><rect width="30" height="32" fill="#1eaee6"/><circle cx="8.5" cy="9" r="6" fill="#fff"/><circle cx="21.5" cy="23" r="6" fill="#fff"/><circle cx="15" cy="16" r="10.5" fill="#fff"/><path d="M19.5 11.5C18.5 10 17 9.3 15 9.3C12.3 9.3 10.7 10.6 10.7 12.5C10.7 16.8 19.8 14.6 19.8 19.2C19.8 21.2 17.8 22.7 15 22.7C12.6 22.7 11 21.8 10 20" fill="none" stroke="#1eaee6" stroke-width="2.3"/></svg>
<!-- help -->
<svg class="a" style="left:997px;top:4px" width="34" height="34" viewBox="0 0 34 34"><defs><radialGradient id="hg" cx="0.5" cy="0.35" r="0.6"><stop offset="0" stop-color="#1a4b8c"/><stop offset="0.7" stop-color="#0b2a5a"/><stop offset="1" stop-color="#2b79c0"/></radialGradient></defs><circle cx="17" cy="17" r="16" fill="url(#hg)"/><path d="M11.5 12.5C11.5 9 14 7 17.3 7C20.8 7 23 9 23 12C23 16 18.5 16 18.5 20H15.5C15.5 15 20 15 20 12.2C20 10.8 19 9.8 17.3 9.8C15.5 9.8 14.5 11 14.5 12.8Z" fill="#fff"/><circle cx="17" cy="24.5" r="2" fill="#fff"/></svg>
<svg class="a" style="left:1044px;top:17px" width="9" height="6" viewBox="0 0 9 6"><path d="M0.5 5.5L4.5 0.8L8.5 5.5Z" fill="#f4f0e8"/></svg>
<svg class="a" style="left:1065px;top:13px" width="17" height="17" viewBox="0 0 17 17"><path d="M1 16.5V1" stroke="#f8f4ec" stroke-width="1.6"/><path d="M1.5 1.5C5 0 8 3 11 2C12.5 1.6 14 2.5 15.8 3.2C14.5 5.5 13 6.5 11 6.5C8 6.5 5 5 1.5 7Z" fill="#f8f4ec" stroke="#7a6a50" stroke-width="0.5"/></svg>
<svg class="a" style="left:1095px;top:13px" width="11" height="17" viewBox="0 0 11 17"><rect x="3.5" y="0.5" width="4" height="2" fill="#f8f4ec"/><rect x="1" y="2" width="9" height="14" rx="1" fill="none" stroke="#f8f4ec" stroke-width="1.6"/><rect x="2.8" y="4" width="5.4" height="4.5" fill="#777"/><rect x="2.8" y="9" width="5.4" height="5.5" fill="#f8f4ec"/></svg>
<svg class="a" style="left:1113px;top:15px" width="17" height="13" viewBox="0 0 17 13"><rect x="0.5" y="9" width="2.4" height="3.5" fill="#f8f4ec"/><rect x="4" y="7" width="2.4" height="5.5" fill="#f8f4ec"/><rect x="7.5" y="5" width="2.4" height="7.5" fill="#f8f4ec"/><rect x="11" y="3" width="2.4" height="9.5" fill="#f8f4ec"/><rect x="14.5" y="1" width="2.4" height="11.5" fill="#f8f4ec"/></svg>
<svg class="a" style="left:1137px;top:13px" width="16" height="17" viewBox="0 0 16 17"><path d="M1 5.5H4L8.5 1.5V15.5L4 11.5H1Z" fill="#f8f4ec" stroke="#8a7a5a" stroke-width="0.5"/><path d="M10.5 5.5C11.8 7 11.8 10 10.5 11.5M12.5 3.5C14.8 6 14.8 11 12.5 13.5" fill="none" stroke="#f8f4ec" stroke-width="1.3"/></svg>
<div class="t" style="left:1168px;top:14px;font-size:12px;color:#fbf8f2;letter-spacing:0px;-webkit-text-stroke:0">РУС</div>
<div class="t" style="left:1209px;top:6px;width:52px;text-align:center;font-size:12px;color:#fbf8f2;-webkit-text-stroke:0">13:20</div>
<div class="t" style="left:1201px;top:21px;width:66px;text-align:center;font-size:11.5px;color:#fbf8f2;-webkit-text-stroke:0">16.11.2014</div>

</div>
</body></html>
